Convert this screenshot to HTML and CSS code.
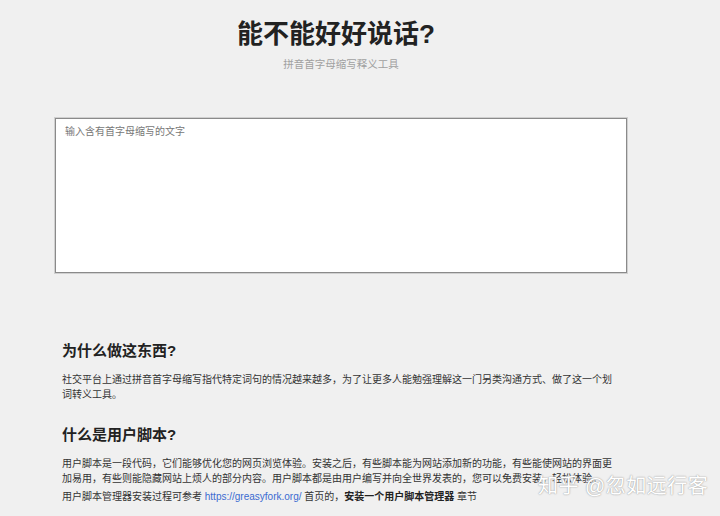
FILE: index.html
```html
<!DOCTYPE html>
<html lang="zh">
<head>
<meta charset="utf-8">
<title>能不能好好说话?</title>
<link rel="stylesheet" href="styles.css">
</head>
<body>
<div class="wrap">
  <header class="head">
    <h1 class="title">能不能好好说话?</h1>
    <p class="sub">拼音首字母缩写释义工具</p>
  </header>
  <textarea class="input" placeholder="输入含有首字母缩写的文字"></textarea>
  <section class="sec sec-first">
    <h2 class="sec-title">为什么做这东西?</h2>
    <p class="txt">社交平台上通过拼音首字母缩写指代特定词句的情况越来越多，为了让更多人能勉强理解这一门另类沟通方式、做了这一个划词转义工具。</p>
  </section>
  <section class="sec">
    <h2 class="sec-title">什么是用户脚本?</h2>
    <p class="txt">用户脚本是一段代码，它们能够优化您的网页浏览体验。安装之后，有些脚本能为网站添加新的功能，有些能使网站的界面更加易用，有些则能隐藏网站上烦人的部分内容。用户脚本都是由用户编写并向全世界发表的，您可以免费安装，轻松体验。</p>
    <p class="txt">用户脚本管理器安装过程可参考 <a class="link" href="#">https://greasyfork.org/</a> 首页的，<b>安装一个用户脚本管理器</b> 章节</p>
  </section>
</div>
<div class="mark">知乎 @忽如远行客</div>
</body>
</html>
```
FILE: styles.css
```css
html, body {
  margin: 0;
  padding: 0;
  background: #f0f0f0;
}
body {
  font-family: "Liberation Sans", "Noto Sans CJK SC", sans-serif;
  color: #333;
  width: 720px;
  height: 516px;
  overflow: hidden;
  position: relative;
}
.wrap {
  width: 572px;
  margin-left: 55px;
}
.head {
  text-align: center;
  padding-top: 17px;
}
.title {
  margin: 0 10px 0 0;
  font-size: 26px;
  line-height: 34px;
  font-weight: 700;
  color: #222;
}
.sub {
  margin: 6px 0 0;
  font-size: 10.5px;
  line-height: 14px;
  color: #a0a0a0;
}
.input {
  display: block;
  box-sizing: border-box;
  width: 572px;
  height: 155px;
  margin-top: 47px;
  padding: 6px 9px;
  border: 1px solid #8a8a8a;
  box-shadow: 0 0 0 1px #d0d0d0;
  background: #fff;
  resize: none;
  font-family: "Liberation Sans", "Noto Sans CJK SC", sans-serif;
  font-size: 10px;
  line-height: 14px;
  outline: none;
}
.input::placeholder {
  color: #777;
}
.sec {
  padding: 0 13px 0 7px;
}
.sec-first {
  margin-top: 67px;
}
.sec-title {
  margin: 0;
  font-size: 15px;
  line-height: 22px;
  font-weight: 700;
  color: #222;
}
.sec-first + .sec {
  margin-top: 22px;
}
.txt {
  margin: 10px 0 0;
  font-size: 10px;
  line-height: 15px;
  color: #333;
}
.txt + .txt {
  margin-top: 3px;
}
.link {
  color: #3b6bd0;
  text-decoration: none;
}
.txt b {
  font-weight: 700;
  color: #222;
}
.mark {
  position: absolute;
  left: 538px;
  top: 472px;
  font-size: 20px;
  line-height: 28px;
  color: #fff;
  text-shadow: 0 0 1px #999, 0 0 2px #bbb;
  letter-spacing: 0.5px;
}
```
